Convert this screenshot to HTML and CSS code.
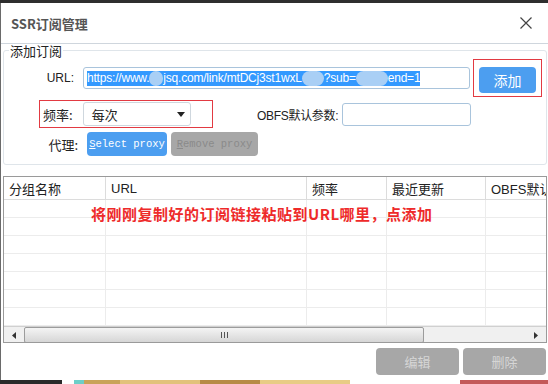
FILE: index.html
```html
<!DOCTYPE html>
<html lang="zh-CN">
<head>
  <meta charset="UTF-8">
  <title>SSR订阅管理</title>
  <link rel="stylesheet" href="styles.css">
</head>
<body>
  <div class="topbar"></div>
  <div class="window">
    <div class="titlebar">
      <span class="title">SSR订阅管理</span>
      <svg class="close" width="12" height="12" viewBox="0 0 12 12">
        <path d="M0.5 0.5 L11.5 11.5 M11.5 0.5 L0.5 11.5" stroke="#444" stroke-width="1.2" fill="none"/>
      </svg>
    </div>

    <fieldset class="group">
      <legend>添加订阅</legend>

      <div class="row row-url">
        <label class="lbl lbl-url">URL:</label>
        <div class="input url-input">
          <span class="sel">https://www.<span class="blob b1"></span>jsq.com/link/mtDCj3st1wxL<span class="blob b2"></span>?sub=<span class="blob b3"></span>end=1</span>
        </div>
        <div class="mark mark-add">
          <button class="btn btn-blue btn-add">添加</button>
        </div>
      </div>

      <div class="row row-freq">
        <div class="mark mark-freq">
          <label class="lbl">频率:</label>
          <div class="select">
            <span>每次</span>
            <svg width="8" height="5" viewBox="0 0 8 5"><path d="M0 0 H8 L4 5 Z" fill="#222"/></svg>
          </div>
        </div>
        <label class="lbl lbl-obfs">OBFS默认参数:</label>
        <div class="input obfs-input"></div>
      </div>

      <div class="row row-proxy">
        <label class="lbl lbl-proxy">代理:</label>
        <button class="btn btn-blue btn-mono"><u>S</u>elect proxy</button>
        <button class="btn btn-gray btn-mono btn-remove"><u>R</u>emove proxy</button>
      </div>
    </fieldset>

    <div class="grid">
      <div class="grid-head">
        <div class="col c1">分组名称</div>
        <div class="col c2">URL</div>
        <div class="col c3">频率</div>
        <div class="col c4">最近更新</div>
        <div class="col c5">OBFS默认参</div>
      </div>
      <div class="grid-body">
        <div class="grow"><div class="c1"></div><div class="c2"></div><div class="c3"></div><div class="c4"></div><div class="c5"></div></div>
        <div class="grow"><div class="c1"></div><div class="c2"></div><div class="c3"></div><div class="c4"></div><div class="c5"></div></div>
        <div class="grow"><div class="c1"></div><div class="c2"></div><div class="c3"></div><div class="c4"></div><div class="c5"></div></div>
        <div class="grow"><div class="c1"></div><div class="c2"></div><div class="c3"></div><div class="c4"></div><div class="c5"></div></div>
        <div class="grow"><div class="c1"></div><div class="c2"></div><div class="c3"></div><div class="c4"></div><div class="c5"></div></div>
        <div class="grow"><div class="c1"></div><div class="c2"></div><div class="c3"></div><div class="c4"></div><div class="c5"></div></div>
        <div class="grow"><div class="c1"></div><div class="c2"></div><div class="c3"></div><div class="c4"></div><div class="c5"></div></div>
        <div class="grow"><div class="c1"></div><div class="c2"></div><div class="c3"></div><div class="c4"></div><div class="c5"></div></div>
      </div>
      <div class="hscroll">
        <div class="arrow">
          <svg width="4" height="7" viewBox="0 0 4 7"><path d="M4 0 V7 L0 3.5 Z" fill="#333"/></svg>
        </div>
        <div class="thumb"><span class="grip"></span></div>
        <div class="track"></div>
        <div class="arrow">
          <svg width="4" height="7" viewBox="0 0 4 7"><path d="M0 0 V7 L4 3.5 Z" fill="#333"/></svg>
        </div>
      </div>
      <div class="note">将刚刚复制好的订阅链接粘贴到URL哪里，点添加</div>
    </div>

    <div class="footer">
      <button class="btn btn-gray btn-foot">编辑</button>
      <button class="btn btn-gray btn-foot">删除</button>
    </div>
  </div>
  <div class="strip"></div>
</body>
</html>
```

FILE: styles.css
```css
html, body {
  margin: 0;
  padding: 0;
}
body {
  width: 548px;
  height: 384px;
  overflow: hidden;
  background: #fff;
  font-family: "Liberation Sans", "Noto Sans CJK SC", sans-serif;
  font-size: 12px;
  color: #222;
}
.topbar {
  height: 3px;
  background: #2e2e2e;
}
.window {
  height: 377px;
  border-left: 1px solid #6a6a6a;
  box-sizing: border-box;
  position: relative;
}
.titlebar {
  height: 40px;
  display: flex;
  align-items: center;
  justify-content: space-between;
  padding: 0 16px 0 10px;
  border-bottom: 1px solid #cfd6dd;
}
.title {
  font-family: "Noto Sans CJK SC", sans-serif;
  font-weight: bold;
  font-size: 13px;
  color: #555;
}
.group {
  margin: 0 1px 0 2px;
  padding: 0 0 8px 0;
  border: 1px solid #dfe5ea;
  border-radius: 3px;
  min-width: 0;
}
.group legend {
  margin-left: 5px;
  padding: 0 1px;
  font-family: "Noto Sans CJK SC", sans-serif;
  font-size: 13px;
  line-height: 13px;
  color: #222;
}
.row {
  display: flex;
  align-items: center;
}
.lbl {
  font-family: "Liberation Sans", "Noto Sans CJK SC", sans-serif;
  font-size: 12px;
  color: #222;
  white-space: nowrap;
}
.row-url {
  margin-top: 2px;
  height: 38px;
}
.lbl-url {
  width: 70px;
  text-align: right;
}
.input {
  height: 22px;
  box-sizing: border-box;
  border: 1px solid #a9c4dc;
  border-radius: 3px;
  background: #fff;
}
.url-input {
  margin-left: 9px;
  width: 387px;
  display: flex;
  align-items: center;
  padding-left: 3px;
  overflow: hidden;
  white-space: nowrap;
}
.sel {
  background: #3399ff;
  color: #fff;
  font-size: 12px;
  line-height: 15px;
  letter-spacing: -0.2px;
}
.blob {
  display: inline-block;
  height: 15px;
  vertical-align: top;
  background: #a9cff5;
  border-radius: 8px;
}
.b1 { width: 14px; }
.b2 { width: 22px; }
.b3 { width: 32px; }
.mark {
  border: 1px solid #e23a42;
  box-sizing: border-box;
}
.mark-add {
  margin-left: 3px;
  width: 69px;
  height: 38px;
  padding: 7px 5px 0 5px;
}
.btn {
  border: none;
  border-radius: 4px;
  padding: 0;
  cursor: pointer;
}
.btn-blue {
  background: #4c9ef0;
  color: #fff;
}
.btn-gray {
  background: #a7a7a7;
  color: #8a8a8a;
}
.btn-add {
  width: 57px;
  height: 26px;
  font-family: "Noto Sans CJK SC", sans-serif;
  font-size: 14px;
}
.row-freq {
  margin-top: 3px;
  padding-left: 35px;
}
.mark-freq {
  width: 174px;
  height: 28px;
  display: flex;
  align-items: center;
  padding-left: 3px;
}
.mark-freq .lbl {
  font-family: "Noto Sans CJK SC", sans-serif;
  font-size: 13px;
}
.select {
  margin-left: 10px;
  width: 108px;
  height: 24px;
  box-sizing: border-box;
  border: 1px solid #cfd7de;
  border-radius: 3px;
  display: flex;
  align-items: center;
  justify-content: space-between;
  padding: 0 5px 0 8px;
  font-family: "Noto Sans CJK SC", sans-serif;
  font-size: 13px;
}
.lbl-obfs {
  margin-left: 44px;
  width: 80px;
  letter-spacing: -0.3px;
}
.obfs-input {
  margin-left: 5px;
  width: 129px;
  height: 23px;
}
.row-proxy {
  margin-top: 4px;
}
.lbl-proxy {
  width: 74px;
  text-align: right;
  font-family: "Noto Sans CJK SC", sans-serif;
  font-size: 13px;
}
.btn-mono {
  height: 24px;
  font-family: "Liberation Mono", monospace;
  font-size: 10.5px;
}
.row-proxy .btn-blue {
  margin-left: 9px;
  width: 80px;
}
.btn-remove {
  margin-left: 4px;
  width: 87px;
}
.grid {
  position: relative;
  margin: 11px 1px 0 2px;
  height: 167px;
  border: 1px solid #9a9a9a;
  box-sizing: border-box;
  overflow: hidden;
}
.grid-head, .grow {
  display: flex;
}
.grid-head {
  height: 23px;
  border-bottom: 1px solid #dcdcdc;
  box-sizing: border-box;
  background: #fff;
}
.grid-head .col {
  display: flex;
  align-items: center;
  padding-left: 5px;
  box-sizing: border-box;
  border-right: 1px solid #dcdcdc;
  font-family: "Liberation Sans", "Noto Sans CJK SC", sans-serif;
  font-size: 13px;
  white-space: nowrap;
  overflow: hidden;
}
.c1 { width: 102px; flex: none; }
.c2 { width: 201px; flex: none; }
.c3 { width: 80px; flex: none; }
.c4 { width: 99px; flex: none; }
.c5 { width: 80px; flex: none; }
.grid-body {
  height: 126px;
  overflow: hidden;
}
.grow {
  height: 17px;
  border-bottom: 1px solid #ececec;
}
.grow div {
  border-right: 1px solid #ececec;
  box-sizing: border-box;
}
.hscroll {
  display: flex;
  height: 16px;
  border-top: 1px solid #d0d0d0;
  background: #f0f0f0;
}
.arrow {
  width: 20px;
  display: flex;
  align-items: center;
  justify-content: center;
}
.thumb {
  width: 400px;
  box-sizing: border-box;
  border: 1px solid #9c9c9c;
  border-radius: 2px;
  background: linear-gradient(#f4f4f4, #d6d6d6);
  display: flex;
  align-items: center;
  justify-content: center;
}
.grip {
  width: 7px;
  height: 6px;
  background: repeating-linear-gradient(90deg, #555 0 1px, transparent 1px 3px);
}
.track {
  flex: 1;
}
.note {
  position: absolute;
  left: 87px;
  top: 26px;
  font-family: "Noto Sans CJK SC", sans-serif;
  font-weight: bold;
  font-size: 15px;
  letter-spacing: 0.5px;
  color: #ee2a2a;
  white-space: nowrap;
}
.footer {
  display: flex;
  justify-content: flex-end;
  gap: 4px;
  padding: 5px 2px 0 0;
}
.btn-foot {
  width: 83px;
  height: 27px;
  font-family: "Noto Sans CJK SC", sans-serif;
  font-size: 13px;
  color: #d6d6d6;
}
.strip {
  height: 4px;
  background: linear-gradient(90deg, #2a2a2a 0 62px, #fff 62px 74px, #6ccfc8 74px 84px, #c9a35a 84px 120px, #e2c27c 120px 200px, #b88b46 200px 260px, #e8cc86 260px 350px, #fff 350px 460px, #c45a5a 460px 548px);
}
```
